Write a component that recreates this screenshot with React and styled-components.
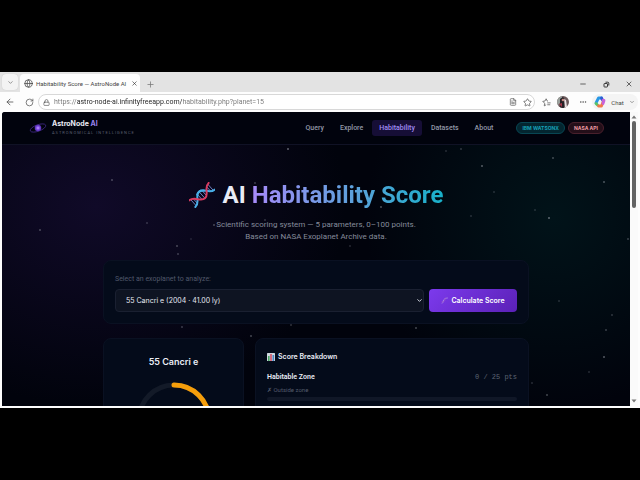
import React from "react";
import styled, { createGlobalStyle } from "styled-components";
import { ArrowLeft, ChevronDown, FileText, Globe, Lock, Minus, MoreHorizontal, Plus, RotateCw, Star, X } from "lucide-react";

const GlobalStyle = createGlobalStyle`
    * {
        box-sizing: border-box;
    }
    body {
        margin: 0;
        background: #000;
        font-family: Roboto, sans-serif;
    }
    button, input, select {
        margin: 0;
        padding: 0;
        border: 0;
        background: none;
        color: inherit;
        font: inherit;
    }
    h1, h2, p {
        margin: 0;
    }
    svg {
        flex: none;
        display: block;
    }
`;

const Screen = styled.div`
    height: 100vh;
    padding: 72px 0;
    background: #000;
`;

const Browser = styled.div`
    height: 100%;
    display: flex;
    flex-direction: column;
    background: #fdfdfd;
    color: #444;
    overflow: hidden;
`;

const TabStrip = styled.div`
    height: 20px;
    flex: none;
    display: flex;
    align-items: flex-end;
    background: #e3e3e3;
`;

const IconButton = styled.button`
    width: ${props => props.$width || 20}px;
    height: 16px;
    flex: none;
    display: flex;
    align-items: center;
    justify-content: center;
    color: ${props => props.$color || "#555"};
`;

const TabMenu = styled(IconButton)`
    margin: 0 2px 2px;
    border-radius: 4px;
    background: #f3f3f3;
    box-shadow: 0 0 1px #bbb;
`;

const Tab = styled.div`
    width: 120px;
    height: 18px;
    display: flex;
    align-items: center;
    justify-content: space-between;
    gap: 3px;
    padding: 0 3px 0 4px;
    border-radius: 4px 4px 0 0;
    background: #fdfdfd;
`;

const TabTitle = styled.span`
    flex: 1;
    font-size: 6px;
    white-space: nowrap;
`;

const WindowButtons = styled.div`
    display: flex;
    gap: 3px;
    margin-left: auto;
    padding-right: 1px;
`;

const Toolbar = styled.div`
    height: 20px;
    flex: none;
    display: flex;
    align-items: center;
`;

const AddressBar = styled.label`
    flex: 1;
    height: 16px;
    display: flex;
    align-items: center;
    gap: 4px;
    margin-right: 1px;
    padding: 0 2px 0 4px;
    border: 1px solid #d8d8d8;
    border-radius: 8px;
    background: #fff;
`;

const Address = styled.input`
    flex: 1;
    min-width: 0;
    outline: none;
    font-size: 7px;
    color: transparent;
    background: linear-gradient(90deg, #777 23px, #222 23px, #222 128px, #777 128px);
    background-clip: text;
`;

const Avatar = styled.span`
    width: 12px;
    height: 12px;
    margin: 0 5px 0 1px;
    flex: none;
    border-radius: 50%;
    overflow: hidden;
`;

const ChatButton = styled.button`
    width: 46px;
    height: 16px;
    display: flex;
    align-items: center;
    justify-content: space-between;
    margin: 0 2px 0 0;
    padding: 0 3px 0 2px;
    border-radius: 8px;
    background: #f4f4f4;
    font-size: 6px;
`;

const Content = styled.div`
    flex: 1;
    min-height: 0;
    display: flex;
    padding: 0 2px 2px;
`;

const Page = styled.div`
    position: relative;
    flex: 1;
    min-width: 0;
    overflow: hidden;
    border-radius: 3px 0 0 0;
    background:
        radial-gradient(ellipse 250px 200px at 15% 32%, #100a28 0%, rgba(16, 10, 40, 0) 100%),
        radial-gradient(ellipse 190px 190px at 88% 36%, #011319 0%, rgba(1, 19, 25, 0) 100%),
        #01030c;
    color: #e9ebf5;
`;

const Sky = styled.svg`
    position: absolute;
    inset: 0;
    width: 100%;
    height: 100%;
`;

const Header = styled.header`
    position: relative;
    height: 33px;
    display: flex;
    align-items: center;
    padding: 0 26px 0 27px;
    border-bottom: 1px solid #101225;
    background: #01030d;
`;

const Brand = styled.a`
    display: flex;
    align-items: center;
    gap: 5px;
    color: inherit;
    text-decoration: none;
`;

const BrandName = styled.div`
    font-family: Inter, sans-serif;
    font-size: 7px;
    line-height: 8px;
    font-weight: 700;
    span {
        color: #9b84ef;
    }
`;

const BrandTag = styled.div`
    margin-top: 1px;
    font-size: 4px;
    line-height: 8px;
    letter-spacing: 1px;
    color: #5b6072;
    white-space: nowrap;
`;

const Nav = styled.nav`
    display: flex;
    gap: 2px;
    margin-left: auto;
`;

const NavLink = styled.a`
    padding: 0 7px;
    border-radius: 3px;
    font-size: 7px;
    line-height: 16px;
    font-weight: 500;
    text-decoration: none;
    color: ${props => props.$active ? "#a28df5" : "#9298a8"};
    background: ${props => props.$active ? "#160e36" : "transparent"};
`;

const Badges = styled.div`
    display: flex;
    gap: 3px;
    margin-left: 16px;
`;

const Badge = styled.span`
    padding: 0 5px;
    border: 1px solid ${props => props.$red ? "#49202c" : "#084653"};
    border-radius: 6px;
    background: ${props => props.$red ? "#240f19" : "#042630"};
    color: ${props => props.$red ? "#ed9ca4" : "#16a1b8"};
    font-family: Inter, sans-serif;
    font-size: 5px;
    line-height: 10px;
    font-weight: 700;
    white-space: nowrap;
`;

const Main = styled.main`
    position: relative;
    max-width: 426px;
    margin: 0 auto;
`;

const Hero = styled.section`
    padding: 34px 0 17px;
    text-align: center;
`;

const Title = styled.h1`
    display: flex;
    align-items: center;
    justify-content: center;
    gap: 8px;
    margin-bottom: 8px;
    font-size: 24px;
    line-height: 32px;
    font-weight: 700;
    white-space: nowrap;
`;

const GradientText = styled.span`
    background: linear-gradient(90deg, #a78bfa, #5aa2da 55%, #18b0c9);
    background-clip: text;
    color: transparent;
`;

const Subtitle = styled.p`
    font-size: 8px;
    line-height: 12px;
    color: #858b9b;
`;

const Panel = styled.section`
    border: 1px solid #0a1122;
    border-radius: 8px;
    background: #040b1a;
`;

const PickerPanel = styled(Panel)`
    margin-bottom: 14px;
    padding: 11px;
`;

const Label = styled.label`
    display: block;
    margin-bottom: 3px;
    font-size: 7px;
    line-height: 14px;
    color: #51586a;
`;

const PickerRow = styled.div`
    display: flex;
    gap: 5px;
`;

const SelectBox = styled.div`
    flex: 1;
    display: grid;
    align-items: center;
    > * {
        grid-area: 1 / 1;
    }
    > svg {
        justify-self: end;
        margin-right: 1px;
        pointer-events: none;
    }
`;

const Select = styled.select`
    width: 100%;
    height: 23px;
    padding: 0 10px;
    appearance: none;
    border: 1px solid #1a2031;
    border-radius: 4px;
    background: #0e1422;
    color: #e6e9f3;
    font-family: Inter, sans-serif;
    font-size: 7px;
`;

const CalculateButton = styled.button`
    width: 88px;
    height: 23px;
    display: flex;
    align-items: center;
    justify-content: center;
    gap: 3px;
    border-radius: 4px;
    background: linear-gradient(135deg, #7c3aed, #5b21b6);
    color: #fff;
    font-family: Inter, sans-serif;
    font-size: 7px;
    font-weight: 600;
    white-space: nowrap;
`;

const Results = styled.div`
    display: grid;
    grid-template-columns: 141px 1fr;
    gap: 11px;
`;

const ScoreCard = styled(Panel)`
    display: flex;
    flex-direction: column;
    align-items: center;
    gap: 14px;
    padding: 17px 12px;
`;

const PlanetName = styled.h2`
    font-family: Inter, sans-serif;
    font-size: 9px;
    line-height: 12px;
    font-weight: 600;
`;

const BreakdownCard = styled(Panel)`
    padding: 12px 11px;
`;

const SectionTitle = styled.h2`
    display: flex;
    align-items: center;
    gap: 3px;
    margin-bottom: 8px;
    font-family: Inter, sans-serif;
    font-size: 7px;
    line-height: 12px;
    font-weight: 600;
`;

const ScoreRow = styled.div`
    display: flex;
    justify-content: space-between;
    font-size: 7px;
    line-height: 12px;
    font-weight: 600;
`;

const Points = styled.span`
    font-family: "Liberation Mono", monospace;
    font-weight: 400;
    color: #5d6473;
`;

const Note = styled.p`
    margin: 2px 0;
    font-size: 6px;
    line-height: 10px;
    color: #555c6d;
`;

const Meter = styled.div`
    height: 4px;
    border-radius: 2px;
    background: #101727;
    margin-bottom: 12px;
`;

const Scrollbar = styled.div`
    width: 8px;
    display: flex;
    flex-direction: column;
    align-items: center;
    gap: 2px;
    padding: 3px 0;
    background: #fafafa;
`;

const Thumb = styled.div`
    width: 4px;
    height: 87px;
    margin-bottom: auto;
    border-radius: 2px;
    background: #636363;
`;

const stars = [
    [286, 37, 1], [110, 68, 0.7], [38, 118, 0.7], [145, 111, 0.5], [175, 134, 0.7], [212, 113, 0.7],
    [253, 71, 0.6], [263, 108, 0.5], [379, 95, 0.8], [480, 54, 0.9], [459, 37, 0.5], [444, 39, 0.4],
    [551, 46, 0.7], [602, 70, 0.8], [492, 80, 0.4], [547, 106, 1], [533, 98, 0.4], [469, 104, 0.4],
    [557, 189, 0.4], [610, 203, 0.5], [604, 218, 0.6], [602, 245, 0.9], [587, 260, 0.4], [545, 283, 0.7],
    [530, 271, 0.4], [249, 224, 0.7], [289, 213, 0.5], [180, 215, 0.6], [176, 142, 0.6], [414, 216, 0.7],
    [189, 127, 0.3], [348, 134, 0.4], [626, 127, 0.6],
];

const StarField = () => (
    <Sky aria-hidden="true">
        {stars.map(([x, y, o]) => (
            <circle key={`${x}-${y}`} cx={x} cy={y} r="0.8" fill="#c8cbd6" opacity={o * 0.8} />
        ))}
    </Sky>
);

const Galaxy = () => (
    <svg width="18" height="16" viewBox="0 0 18 16" fill="none">
        <defs>
            <radialGradient id="core">
                <stop offset="0" stopColor="#c4a5ff" />
                <stop offset="0.5" stopColor="#8350e8" />
                <stop offset="1" stopColor="#4c2aa4" />
            </radialGradient>
        </defs>
        <ellipse cx="9" cy="8" rx="8.2" ry="3.2" transform="rotate(-20 9 8)" stroke="#4a2f96" strokeWidth="0.7" />
        <circle cx="9" cy="8" r="3.3" fill="url(#core)" />
    </svg>
);

const rungs = [[-11.5, 4], [-9, 3], [-3, 3.5], [0, 4], [3, 3.5], [9, 3], [11.5, 4]];

const Dna = () => (
    <svg width="26" height="26" viewBox="-13 -13 26 26" fill="none" strokeLinecap="round">
        <g transform="rotate(-42)">
            {rungs.map(([x, h]) => (
                <path key={x} d={`M${x} ${-h}V${h}`} stroke="#6f83c4" strokeWidth="0.9" />
            ))}
            <path d="M-13 4.500C-6 4.500 -6 -4.500 0 -4.500S6 4.500 13 4.500" stroke="#48aee6" strokeWidth="2" />
            <path d="M-13 -4.500C-6 -4.500 -6 4.500 0 4.500S6 -4.500 13 -4.500" stroke="#d83b60" strokeWidth="2" />
            <path d="M-3.500 -3.500Q-2 -4.500 0 -4.500T4.500 -2" stroke="#48aee6" strokeWidth="2" />
        </g>
    </svg>
);

const MiniDna = () => (
    <svg width="7" height="7" viewBox="0 0 7 7" fill="none" strokeWidth="0.7">
        <path d="M1 6.500C3 5 1.500 3 3.500 2C5 1.500 5 1 6.800 1" stroke="#b9a5e8" />
        <path d="M0.500 5C3 5 4 4 4 2.500L4.500 0.500" stroke="#a05ac9" />
    </svg>
);

const BarChart = () => (
    <svg width="8" height="8" viewBox="0 0 8 8">
        <rect width="8" height="8" rx="0.5" fill="#ced8de" />
        <rect x="1" y="3" width="1.600" height="5" fill="#4aa565" />
        <rect x="3.200" y="1" width="1.600" height="7" fill="#d45469" />
        <rect x="5.500" y="2" width="1.600" height="6" fill="#4a86c4" />
    </svg>
);

const ScoreRing = () => (
    <svg width="76" height="76" viewBox="0 0 76 76" fill="none" strokeWidth="5">
        <circle cx="38" cy="38" r="35" stroke="#131a28" />
        <circle cx="38" cy="38" r="35" stroke="#f59e0b" strokeLinecap="round" pathLength="100" strokeDasharray="45 100" transform="rotate(-90 38 38)" />
    </svg>
);

const ProfilePhoto = () => (
    <svg width="12" height="12" viewBox="0 0 12 12">
        <rect width="12" height="12" fill="#6b5a5c" />
        <path d="M0 0h5v5L1 9H0z" fill="#9aa09c" />
        <path d="M3 3l3-2 2 3-1 8H3z" fill="#252126" />
        <path d="M7 3l2 1 1 7H8z" fill="#e9dfe1" />
        <circle cx="6" cy="4" r="1.300" fill="#c68a83" />
        <path d="M2 8l3-1v4z" fill="#a33647" />
    </svg>
);

const Copilot = () => (
    <svg width="12" height="12" viewBox="0 0 12 12" fill="none" strokeWidth="2.800" strokeLinejoin="round" strokeLinecap="round">
        <path d="M7.500 2H4.500L2 7" stroke="#2998e5" />
        <path d="M2 7.500L3.500 9" stroke="#59c467" />
        <path d="M4.500 10H7.500L9 6" stroke="#f2774b" />
        <path d="M7.500 2L8.500 4" stroke="#315bd3" />
        <path d="M9 4.500H10L9 7.500" stroke="#c861db" />
    </svg>
);

const FavoritesIcon = () => (
    <svg width="9" height="9" viewBox="0 0 24 24" fill="none" stroke="#555" strokeWidth="2" strokeLinejoin="round">
        <path d="M16 9L14 8 11 2 8 8 2 9l5 5-1 7 5-3M14 13h9M14 18h8" />
    </svg>
);

const RestoreIcon = () => (
    <svg width="7" height="7" viewBox="0 0 7 7" fill="none" stroke="#222" strokeWidth="0.900">
        <rect x="1" y="2.500" width="3.500" height="3.500" rx="0.600" />
        <path d="M2.500 1.200h2.300a1 1 0 0 1 1 1v2.300" />
    </svg>
);

const Arrow = ({ down }) => (
    <svg width="6" height="4" viewBox="0 0 6 4">
        <path d={down ? "M0.500 0.500h5L3 3.500z" : "M0.500 3.500h5L3 0.500z"} fill="#777" />
    </svg>
);

const navItems = ["Query", "Explore", "Habitability", "Datasets", "About"];

const App = () => {
    return (
        <Screen>
            <GlobalStyle />
            <Browser>
                <TabStrip>
                    <TabMenu $width={16} aria-label="Tab menu"><ChevronDown size={7} /></TabMenu>
                    <Tab>
                        <Globe size={9} strokeWidth={2} />
                        <TabTitle>Habitability Score — AstroNode AI</TabTitle>
                        <IconButton $width={10} $color="#222" aria-label="Close tab"><X size={7} /></IconButton>
                    </Tab>
                    <IconButton aria-label="New tab" $color="#777"><Plus size={9} /></IconButton>
                    <WindowButtons>
                        <IconButton $color="#222" aria-label="Minimize"><Minus size={8} /></IconButton>
                        <IconButton aria-label="Restore"><RestoreIcon /></IconButton>
                        <IconButton $color="#222" aria-label="Close"><X size={8} /></IconButton>
                    </WindowButtons>
                </TabStrip>
                <Toolbar>
                    <IconButton aria-label="Back"><ArrowLeft size={10} /></IconButton>
                    <IconButton $width={18} aria-label="Reload"><RotateCw size={9} /></IconButton>
                    <AddressBar>
                        <Lock size={7} />
                        <Address aria-label="Address" defaultValue="https://astro-node-ai.infinityfreeapp.com/habitability.php?planet=15" />
                        <IconButton $width={10} aria-label="Reader"><FileText size={8} /></IconButton>
                        <IconButton $width={10} aria-label="Add to favorites"><Star size={9} /></IconButton>
                    </AddressBar>
                    <IconButton aria-label="Favorites"><FavoritesIcon /></IconButton>
                    <Avatar><ProfilePhoto /></Avatar>
                    <IconButton $width={18} aria-label="More"><MoreHorizontal size={8} /></IconButton>
                    <ChatButton>
                        <Copilot />
                        Chat
                        <ChevronDown size={6} />
                    </ChatButton>
                </Toolbar>
                <Content>
                    <Page>
                        <StarField />
                        <Header>
                            <Brand href="#home">
                                <Galaxy />
                                <div>
                                    <BrandName>AstroNode <span>AI</span></BrandName>
                                    <BrandTag>ASTRONOMICAL INTELLIGENCE</BrandTag>
                                </div>
                            </Brand>
                            <Nav>
                                {navItems.map(item => (
                                    <NavLink key={item} href={`#${item.toLowerCase()}`} $active={item === "Habitability"}>{item}</NavLink>
                                ))}
                            </Nav>
                            <Badges>
                                <Badge>IBM WATSONX</Badge>
                                <Badge $red>NASA API</Badge>
                            </Badges>
                        </Header>
                        <Main>
                            <Hero>
                                <Title>
                                    <Dna />
                                    <span>AI <GradientText>Habitability Score</GradientText></span>
                                </Title>
                                <Subtitle>
                                    Scientific scoring system — 5 parameters, 0–100 points.<br />
                                    Based on NASA Exoplanet Archive data.
                                </Subtitle>
                            </Hero>
                            <PickerPanel>
                                <Label htmlFor="planet">Select an exoplanet to analyze:</Label>
                                <PickerRow>
                                    <SelectBox>
                                        <Select id="planet" defaultValue="15">
                                            <option value="15">55 Cancri e (2004 · 41.00 ly)</option>
                                        </Select>
                                        <ChevronDown size={7} strokeWidth={3} />
                                    </SelectBox>
                                    <CalculateButton><MiniDna />Calculate Score</CalculateButton>
                                </PickerRow>
                            </PickerPanel>
                            <Results>
                                <ScoreCard>
                                    <PlanetName>55 Cancri e</PlanetName>
                                    <ScoreRing />
                                </ScoreCard>
                                <BreakdownCard>
                                    <SectionTitle><BarChart />Score Breakdown</SectionTitle>
                                    <ScoreRow>
                                        <span>Habitable Zone</span>
                                        <Points>0 / 25 pts</Points>
                                    </ScoreRow>
                                    <Note>✗ Outside zone</Note>
                                    <Meter />
                                </BreakdownCard>
                            </Results>
                        </Main>
                    </Page>
                    <Scrollbar>
                        <Arrow />
                        <Thumb />
                        <Arrow down />
                    </Scrollbar>
                </Content>
            </Browser>
        </Screen>
    );
};

export default App;
